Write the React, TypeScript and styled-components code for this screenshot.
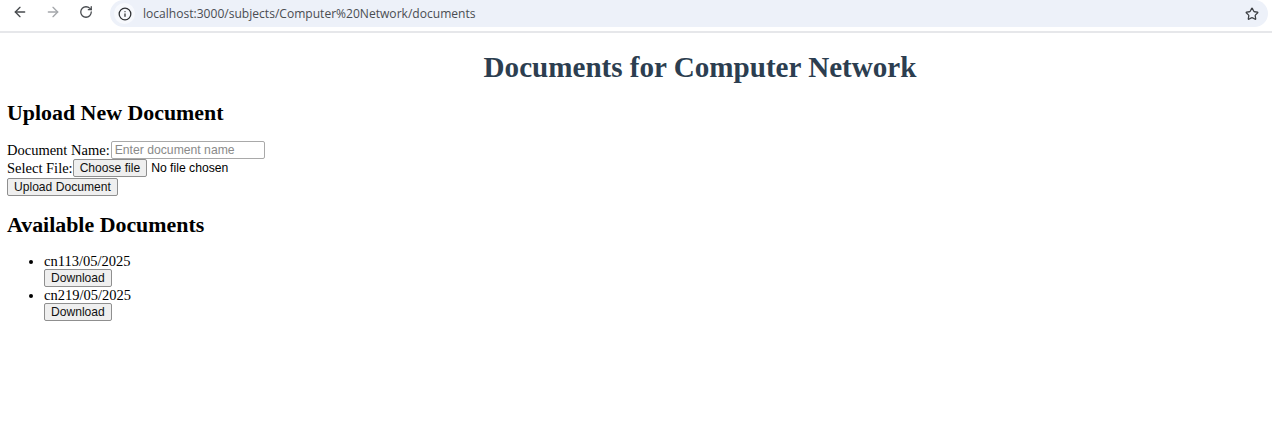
import { createGlobalStyle } from "styled-components";
import styled from "styled-components";
import { ArrowLeft, ArrowRight, RotateCw, Info, Star } from "lucide-react";

const GlobalStyle = createGlobalStyle`
  html, body {
    margin: 0;
    padding: 0;
    background: #fff;
    color: #000;
    font-family: "Liberation Serif", "Times New Roman", serif;
    font-size: 14.5px;
  }
`;

const BrowserBar = styled.div`
  display: flex;
  align-items: flex-start;
  height: 31px;
  padding-right: 4px;
  border-bottom: 2px solid #e6e7ea;
  background: #fff;
`;

const NavButton = styled.span<{ $faded?: boolean }>`
  display: flex;
  align-items: center;
  justify-content: center;
  width: 33px;
  height: 24px;
  color: ${(p) => (p.$faded ? "#a4a7ab" : "#474a4e")};
`;

const NavGroup = styled.div`
  display: flex;
  padding-left: 3px;
  width: 110px;
  box-sizing: border-box;
`;

const UrlPill = styled.div`
  flex: 1;
  display: flex;
  align-items: center;
  height: 27px;
  padding: 0 9px 0 4px;
  border-radius: 14px;
  background: #edf1f9;
`;

const InfoBadge = styled.span`
  display: flex;
  align-items: center;
  justify-content: center;
  width: 21px;
  height: 21px;
  margin-right: 8px;
  border-radius: 50%;
  background: #f7f9fd;
  color: #2f3134;
`;

const UrlText = styled.span`
  flex: 1;
  font-family: "Open Sans", "Liberation Sans", sans-serif;
  font-size: 12.07px;
  color: #4a4d52;
`;

const Page = styled.main`
  padding: 0 7px;
`;

const Title = styled.h1`
  margin: 18px 0 17px;
  padding-left: 128px;
  text-align: center;
  font-size: 29.1px;
  line-height: 32px;
  font-weight: 700;
  color: #2c3e50;
`;

const SectionTitle = styled.h2`
  margin: 0;
  font-size: 21.9px;
  line-height: 25px;
  font-weight: 700;
`;

const UploadForm = styled.form`
  display: flex;
  flex-direction: column;
  align-items: flex-start;
  margin: 16px 0 16px;
`;

const FieldRow = styled.div<{ $gap?: number }>`
  display: flex;
  align-items: center;
  height: 18px;
  margin-bottom: ${(p) => p.$gap ?? 0}px;
`;

const TextInput = styled.input`
  box-sizing: border-box;
  width: 154px;
  height: 18px;
  margin-left: 1px;
  padding: 1px 3px;
  border: 1px solid #a9a9a9;
  border-radius: 2px;
  font-family: "Liberation Sans", Arial, sans-serif;
  font-size: 12.2px;
  &::placeholder {
    color: #8a8a8a;
  }
`;

const PlainButton = styled.button`
  display: block;
  box-sizing: border-box;
  height: 18px;
  padding: 0 6px;
  border: 1px solid #8f8f8f;
  border-radius: 2px;
  background: #efefef;
  font-family: "Liberation Sans", Arial, sans-serif;
  font-size: 12.1px;
  line-height: 16px;
  color: #111;
`;

const FileStatus = styled.span`
  margin-left: 4px;
  font-family: "Liberation Sans", Arial, sans-serif;
  font-size: 12.2px;
`;

const DocumentList = styled.ul`
  margin: 16px 0 0;
  padding-left: 37px;
`;

const DocumentItem = styled.li`
  line-height: 16px;
`;

const docs = ["cn113/05/2025", "cn219/05/2025"];

export default function App() {
  return (
    <>
      <GlobalStyle />
      <BrowserBar>
        <NavGroup>
          <NavButton>
            <ArrowLeft size={16} strokeWidth={2} />
          </NavButton>
          <NavButton $faded>
            <ArrowRight size={16} strokeWidth={2} />
          </NavButton>
          <NavButton>
            <RotateCw size={14} strokeWidth={2.2} />
          </NavButton>
        </NavGroup>
        <UrlPill>
          <InfoBadge>
            <Info size={14} strokeWidth={2.2} />
          </InfoBadge>
          <UrlText>localhost:3000/subjects/Computer%20Network/documents</UrlText>
          <Star size={14} strokeWidth={2.2} color="#3f4246" />
        </UrlPill>
      </BrowserBar>
      <Page>
        <Title>Documents for Computer Network</Title>
        <SectionTitle>Upload New Document</SectionTitle>
        <UploadForm onSubmit={(e) => e.preventDefault()}>
          <FieldRow>
            <label>Document Name:</label>
            <TextInput type="text" placeholder="Enter document name" />
          </FieldRow>
          <FieldRow $gap={1}>
            <label>Select File:</label>
            <PlainButton type="button">Choose file</PlainButton>
            <FileStatus>No file chosen</FileStatus>
          </FieldRow>
          <PlainButton type="submit">Upload Document</PlainButton>
        </UploadForm>
        <SectionTitle>Available Documents</SectionTitle>
        <DocumentList>
          {docs.map((doc) => (
            <DocumentItem key={doc}>
              {doc}
              <PlainButton type="button">Download</PlainButton>
            </DocumentItem>
          ))}
        </DocumentList>
      </Page>
    </>
  );
}
